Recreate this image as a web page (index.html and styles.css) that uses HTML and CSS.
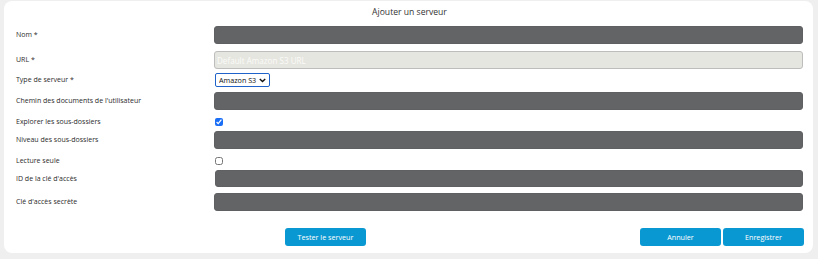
FILE: index.html
```html
<!DOCTYPE html>
<html lang="fr">
<head>
<meta charset="utf-8">
<title>Ajouter un serveur</title>
<link rel="stylesheet" href="styles.css">
</head>
<body>
<div class="card">
  <div class="title">Ajouter un serveur</div>
  <form class="form">
    <div class="row row-nom">
      <label class="label">Nom *</label>
      <input class="field" type="text">
    </div>
    <div class="row row-url">
      <label class="label">URL *</label>
      <input class="field field-light" type="text" placeholder="Default Amazon S3 URL">
    </div>
    <div class="row row-type">
      <label class="label">Type de serveur *</label>
      <div class="select-wrap">
        <select class="select"><option>Amazon S3</option></select>
        <svg class="chev" width="7" height="5" viewBox="0 0 7 5"><path d="M0.8 1 L3.5 3.6 L6.2 1" fill="none" stroke="#111" stroke-width="1.4"/></svg>
      </div>
    </div>
    <div class="row row-chemin">
      <label class="label">Chemin des documents de l'utilisateur</label>
      <input class="field" type="text">
    </div>
    <div class="row row-explorer">
      <label class="label">Explorer les sous-dossiers</label>
      <input class="check" type="checkbox" checked>
    </div>
    <div class="row row-niveau">
      <label class="label">Niveau des sous-dossiers</label>
      <input class="field" type="text">
    </div>
    <div class="row row-lecture">
      <label class="label">Lecture seule</label>
      <input class="check" type="checkbox">
    </div>
    <div class="row row-id">
      <label class="label">ID de la clé d'accès</label>
      <input class="field field-short" type="text">
    </div>
    <div class="row row-cle">
      <label class="label">Clé d'accès secrète</label>
      <input class="field" type="password">
    </div>
    <div class="footer">
      <button type="button" class="btn">Tester le serveur</button>
      <div class="actions">
        <button type="button" class="btn">Annuler</button>
        <button type="button" class="btn">Enregistrer</button>
      </div>
    </div>
  </form>
</div>
</body>
</html>
```

FILE: styles.css
```css
* { box-sizing: border-box; }
html, body { margin: 0; padding: 0; }
body {
  background: #efefef;
  font-family: "Open Sans", "Liberation Sans", sans-serif;
  font-size: 7px;
  color: #333;
  width: 818px;
  height: 259px;
  padding-top: 1px;
}
.card {
  margin-left: 4px;
  width: 809px;
  height: 252px;
  background: #fff;
  border-radius: 8px;
  padding: 5px 10px 0 12px;
}
.title {
  text-align: center;
  font-size: 8.6px;
  line-height: 12px;
  color: #333;
}
.form { display: flex; flex-direction: column; }
.row { display: flex; align-items: center; }
.label {
  width: 198px;
  flex: none;
  font-size: 7px;
  line-height: 10px;
  color: #2b2b2b;
}
.field {
  flex: 1;
  height: 18px;
  border: 1px solid #5f6062;
  background: #636466;
  border-radius: 3px;
  margin: 0;
  padding: 0 2px;
  font-family: inherit;
  font-size: 7px;
  color: #fff;
  outline: none;
}
.field-light {
  background: #e6e6e0;
  border-color: #bdbdbd;
  font-size: 8.1px;
}
.field-light::placeholder { color: #fbfbf8; opacity: 1; }
.field-short { height: 17px; margin-left: 1px; }
.row-nom { margin-top: 8px; }
.row-url { margin-top: 7px; }
.row-type { margin-top: 4px; height: 14px; }
.row-chemin { margin-top: 5px; }
.row-explorer { margin-top: 6px; height: 11px; }
.row-niveau { margin-top: 4px; }
.row-lecture { margin-top: 7px; height: 10px; }
.row-id { margin-top: 4px; }
.row-cle { margin-top: 6px; }
.select-wrap { position: relative; width: 55px; height: 14px; margin-left: 1px; }
.select {
  display: block;
  appearance: none;
  -webkit-appearance: none;
  width: 55px;
  height: 14px;
  margin: 0;
  border: 1px solid #1f62c9;
  border-radius: 2px;
  background: #fff;
  font-family: inherit;
  font-size: 7.2px;
  color: #111;
  padding: 0 0 0 3px;
  line-height: 12px;
}
.chev { position: absolute; right: 4px; top: 5px; pointer-events: none; }
.check {
  display: block;
  width: 8px;
  height: 8px;
  margin: 0 0 0 1px;
  accent-color: #1a6ef5;
}
.footer {
  display: flex;
  justify-content: space-between;
  margin-top: 17px;
  padding-left: 269px;
  margin-right: -1px;
}
.actions { display: flex; gap: 2px; }
.btn {
  width: 81px;
  height: 18px;
  border: none;
  border-radius: 3px;
  background: #0a98d2;
  color: #fff;
  font-family: inherit;
  font-size: 7.2px;
  font-weight: 500;
  padding: 0;
}
```
